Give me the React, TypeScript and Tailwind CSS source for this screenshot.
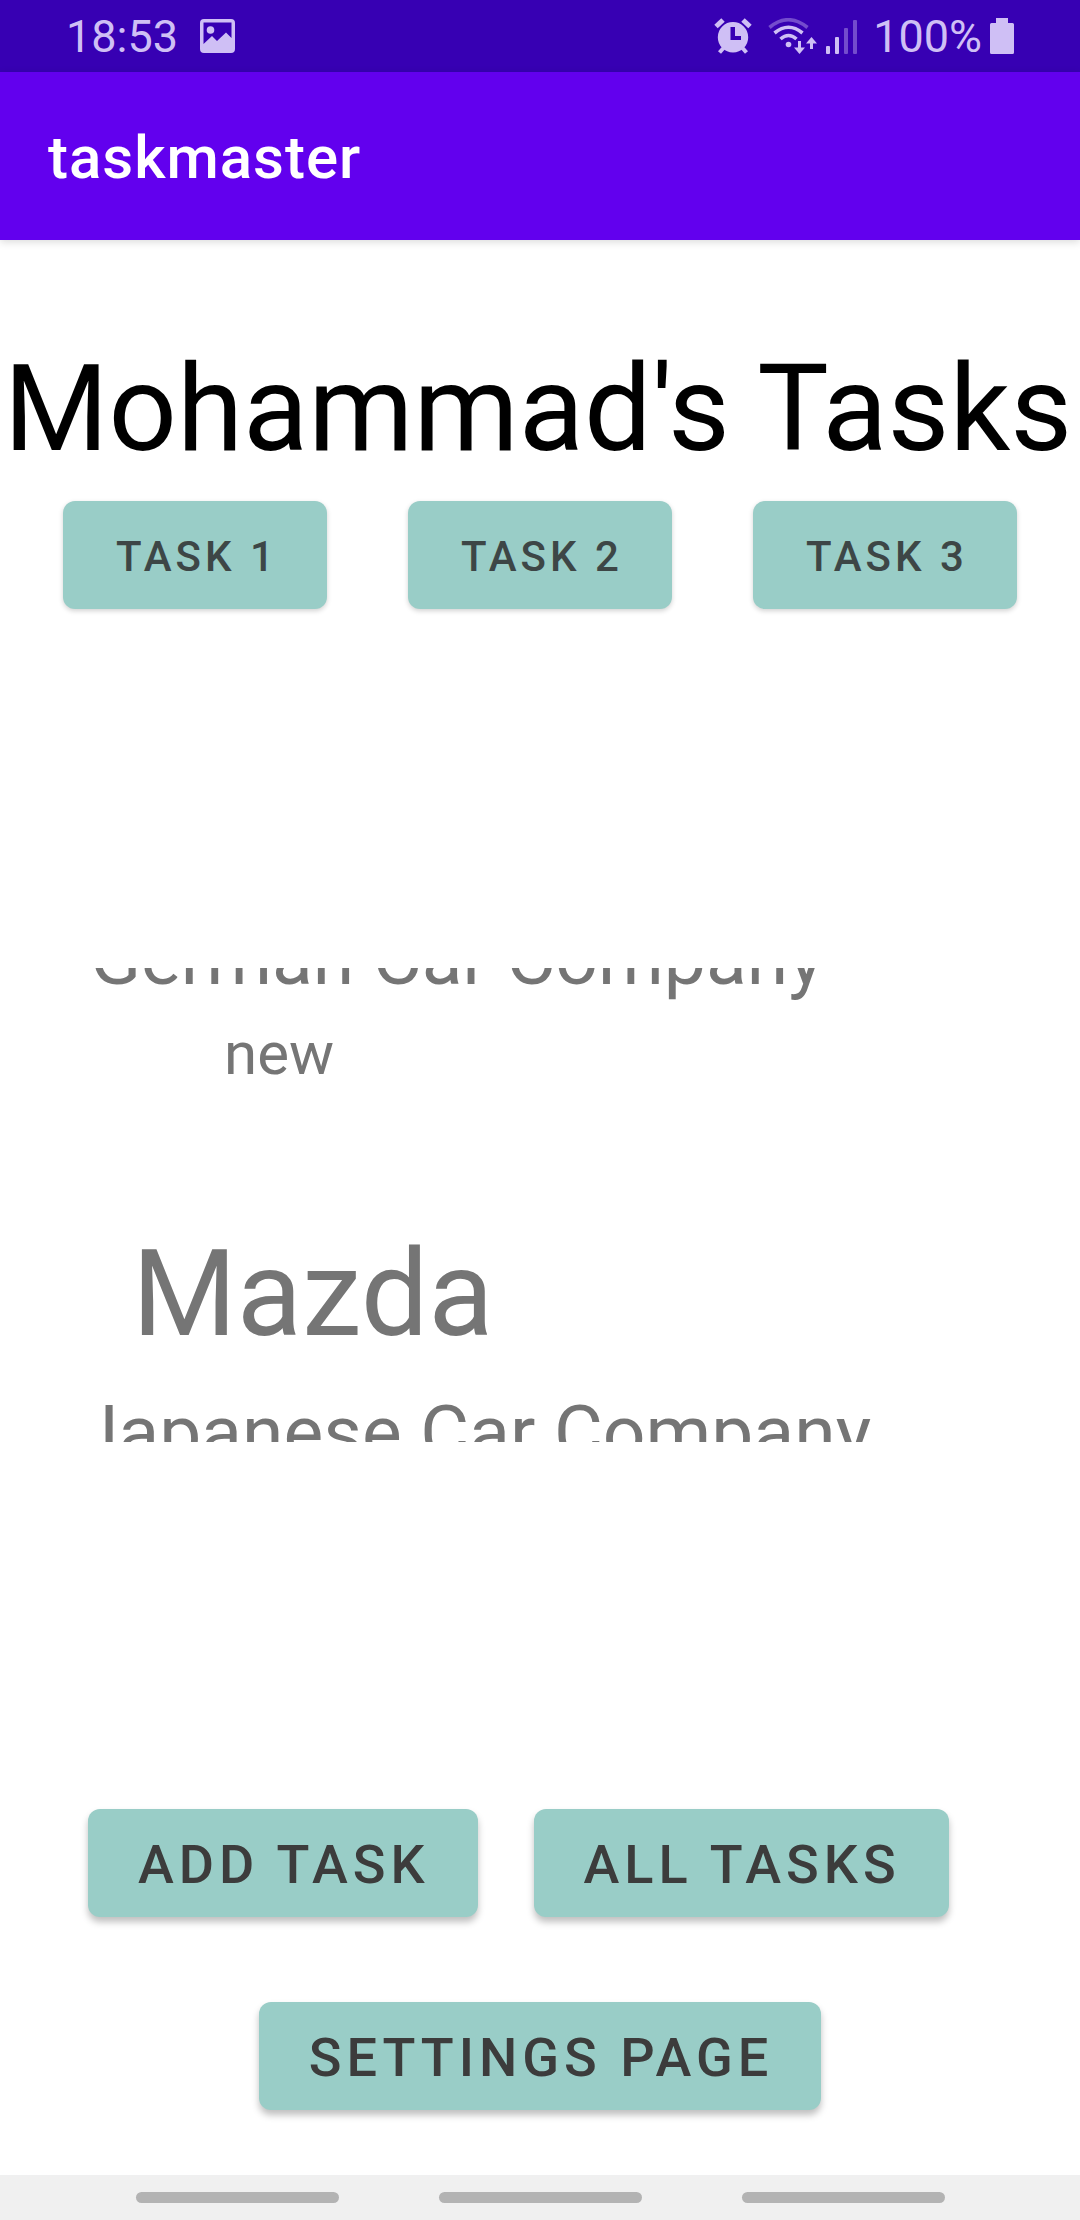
import type { ReactNode } from "react";

function PictureIcon() {
  return (
    <svg viewBox="0 0 35 34" className="h-[34px] w-[35px]" fill="currentColor" aria-hidden="true">
      <path
        fillRule="evenodd"
        d="M4 0H31Q35 0 35 4V30Q35 34 31 34H4Q0 34 0 30V4Q0 0 4 0ZM3.500 3.500V25L12 17L17 22L26 13.500L31.500 19V3.500Z"
      />
      <circle cx="10.500" cy="11" r="3.800" />
    </svg>
  );
}

function AlarmIcon() {
  return (
    <svg viewBox="0 0 38 36" className="h-9 w-[38px]" fill="currentColor" aria-hidden="true">
      <path fillRule="evenodd" d="M19 4A15.200 15.200 0 1 1 19 34.400A15.200 15.200 0 1 1 19 4ZM16.500 9V22H27V18H21V9Z" />
      <g stroke="currentColor" strokeWidth="5" fill="none">
        <path d="M2 8.500L9 2" />
        <path d="M29 2L36 8.500" />
        <path d="M9.500 30L5.500 34.500" strokeWidth="4" />
        <path d="M28.500 30L32.500 34.500" strokeWidth="4" />
      </g>
    </svg>
  );
}

function WifiIcon() {
  return (
    <svg viewBox="0 0 50 36" className="h-9 w-[50px]" fill="none" stroke="currentColor" strokeWidth="3.600" aria-hidden="true">
      <path d="M1.500 9.500Q20 -6 39.500 9.500" strokeOpacity="0.4" />
      <path d="M6.500 15Q20.500 3.500 34.500 15" />
      <path d="M12.500 21Q20.500 14 28.500 21" />
      <circle cx="20.500" cy="26.500" r="2.800" fill="currentColor" stroke="none" />
      <g strokeWidth="3">
        <path d="M31.500 23V33" />
        <path d="M43.500 31V21.500" />
      </g>
      <path d="M26 29.500H37L31.500 36Z" fill="currentColor" stroke="none" />
      <path d="M38 25.500H49L43.500 19Z" fill="currentColor" stroke="none" />
    </svg>
  );
}

function SignalIcon() {
  return (
    <svg viewBox="0 0 31 36" className="h-9 w-[31px]" fill="currentColor" aria-hidden="true">
      <rect x="0" y="28" width="4" height="8" rx="1" />
      <rect x="9" y="19" width="4" height="17" rx="1" />
      <rect x="18" y="10" width="4" height="26" rx="1" opacity="0.4" />
      <rect x="27" y="2" width="4" height="34" rx="1" opacity="0.4" />
    </svg>
  );
}

function BatteryIcon() {
  return (
    <svg viewBox="0 0 24 36" className="h-9 w-6" fill="currentColor" aria-hidden="true">
      <path d="M6 0H18V5H22.500Q24 5 24 6.500V34.500Q24 36 22.500 36H1.500Q0 36 0 34.500V6.500Q0 5 1.500 5H6Z" />
    </svg>
  );
}

function TaskButton({ children }: { children: ReactNode }) {
  return (
    <button
      type="button"
      className="h-[108px] w-[264px] rounded-xl bg-[#99cdc7] pt-0.5 pl-1 text-[42px] font-medium tracking-[4px] text-[#3d4646] uppercase shadow-[0_2px_5px_rgba(0,0,0,0.18)]"
    >
      {children}
    </button>
  );
}

function ActionButton({ children }: { children: ReactNode }) {
  return (
    <button
      type="button"
      className="h-[108px] rounded-xl bg-[#99cdc7] pt-0.5 pr-12 pl-[50px] text-[54px] font-medium tracking-[5px] text-[#3c3c3c] uppercase shadow-[0_5px_7px_rgba(0,0,0,0.25)]"
    >
      {children}
    </button>
  );
}

export default function App() {
  return (
    <div className="flex min-h-screen flex-col bg-white font-['Roboto',sans-serif]">
      <div className="flex h-[72px] items-center justify-between bg-[#3700b3] px-[66px] text-[45px] leading-[72px] text-[#cfbff5]">
        <div className="flex items-center gap-[22px]">
          <span className="pt-0.5">18:53</span>
          <PictureIcon />
        </div>
        <div className="flex items-center">
          <AlarmIcon />
          <span className="ml-4">
            <WifiIcon />
          </span>
          <span className="ml-2">
            <SignalIcon />
          </span>
          <span className="ml-4 pt-0.5">100%</span>
          <span className="ml-2">
            <BatteryIcon />
          </span>
        </div>
      </div>

      <header className="flex h-[168px] items-center bg-[#6200ee] px-12 pt-1 text-[60px] font-medium tracking-[1px] text-white shadow-[0_2px_8px_rgba(0,0,0,0.15)]">
        taskmaster
      </header>

      <main className="flex grow flex-col">
        <h1 className="mt-[99px] pr-1 text-center text-[120px] leading-[140px] whitespace-nowrap text-black">
          Mohammad's Tasks
        </h1>

        <div className="mt-[22px] flex justify-between px-[63px]">
          <TaskButton>Task 1</TaskButton>
          <TaskButton>Task 2</TaskButton>
          <TaskButton>Task 3</TaskButton>
        </div>

        <ul className="mt-[359px] h-[474px] overflow-hidden text-[#757575]">
          <li className="-mt-[54px]">
            <p className="pl-[90px] text-[75px] leading-[88px]">German Car Company</p>
            <p className="mt-4 pl-[224px] text-[60px] leading-[72px]">new</p>
          </li>
          <li className="mt-[134px]">
            <p className="pl-[132px] text-[120px] leading-[140px]">Mazda</p>
            <p className="mt-6 pl-[77px] text-[75px] leading-[88px]">Japanese Car Company</p>
          </li>
        </ul>

        <div className="mt-auto flex gap-14 px-[88px]">
          <ActionButton>Add Task</ActionButton>
          <ActionButton>All Tasks</ActionButton>
        </div>
        <div className="mt-[85px] mb-[65px] flex justify-center">
          <ActionButton>Settings Page</ActionButton>
        </div>
      </main>

      <nav className="flex h-[45px] items-center justify-center gap-[100px] bg-[#f0f0f0]">
        <button type="button" aria-label="Recent apps" className="h-[11px] w-[203px] rounded-full bg-[#b3b3b3]" />
        <button type="button" aria-label="Home" className="h-[11px] w-[203px] rounded-full bg-[#b3b3b3]" />
        <button type="button" aria-label="Back" className="h-[11px] w-[203px] rounded-full bg-[#b3b3b3]" />
      </nav>
    </div>
  );
}
